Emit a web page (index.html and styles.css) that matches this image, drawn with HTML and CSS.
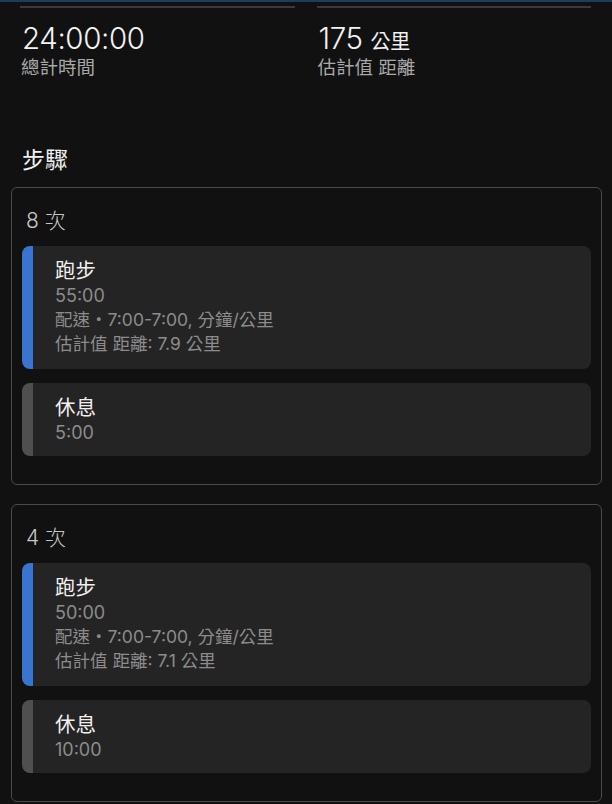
FILE: index.html
```html
<!DOCTYPE html>
<html lang="zh-Hant">
<head>
<meta charset="utf-8">
<link rel="stylesheet" href="styles.css">
</head>
<body>
<div class="topline"></div>
<div class="stats">
  <div class="stat">
    <div class="bar"></div>
    <div class="value">24:00:00</div>
    <div class="label">總計時間</div>
  </div>
  <div class="stat">
    <div class="bar"></div>
    <div class="value">175 <span class="unit">公里</span></div>
    <div class="label">估計值 距離</div>
  </div>
</div>
<h2 class="section">步驟</h2>
<div class="card">
  <div class="repeat">8 次</div>
  <div class="step run">
    <div class="title">跑步</div>
    <div class="time">55:00</div>
    <div class="sub">配速・7:00-7:00, 分鐘/公里</div>
    <div class="sub">估計值 距離: 7.9 公里</div>
  </div>
  <div class="step rest">
    <div class="title">休息</div>
    <div class="time">5:00</div>
  </div>
</div>
<div class="card">
  <div class="repeat">4 次</div>
  <div class="step run">
    <div class="title">跑步</div>
    <div class="time">50:00</div>
    <div class="sub">配速・7:00-7:00, 分鐘/公里</div>
    <div class="sub">估計值 距離: 7.1 公里</div>
  </div>
  <div class="step rest">
    <div class="title">休息</div>
    <div class="time">10:00</div>
  </div>
</div>
</body>
</html>
```

FILE: styles.css
```css
html, body {
  margin: 0;
  padding: 0;
  background: #111111;
  color: #f0f0f0;
  font-family: Inter, "Noto Sans CJK TC", sans-serif;
}
.topline {
  height: 2px;
  background: #1f3c5a;
}
.stats {
  display: grid;
  grid-template-columns: 1fr 1fr;
  column-gap: 22px;
  padding: 4px 21px 0 20px;
}
.bar {
  height: 2px;
  background: #3a3a3a;
}
.value {
  margin-top: 12px;
  padding-left: 2px;
  font-size: 29.5px;
  font-weight: 300;
  line-height: 36px;
  height: 36px;
  color: #f2f2f2;
  letter-spacing: -0.4px;
}
.unit {
  font-size: 20px;
  line-height: 1;
  font-weight: 400;
}
.label {
  padding-left: 1px;
  font-size: 18.5px;
  line-height: 22px;
  color: #a8a8a8;
}
.section {
  margin: 67px 0 0 22px;
  font-size: 23px;
  font-weight: normal;
  line-height: 30px;
  color: #f0f0f0;
}
.card {
  margin: 12px 10px 19px 11px;
  border: 1.5px solid #4a4a4a;
  border-radius: 6px;
  padding: 19px 10px 28px 10px;
}
.repeat {
  padding-left: 4px;
  font-size: 21px;
  font-weight: 300;
  line-height: 28px;
  color: #c8c8c8;
  margin-bottom: 11px;
}
.step {
  background: #242424;
  border-radius: 8px;
  padding: 12px 12px 13px 22px;
  margin-bottom: 14px;
  border-left: 11px solid #3874d0;
}
.step.rest {
  border-left-color: #4f4f4f;
  margin-bottom: 0;
  padding-bottom: 11px;
}
.title {
  font-size: 20.5px;
  line-height: 26px;
  color: #f0f0f0;
}
.time {
  font-size: 18px;
  line-height: 24px;
  color: #8c8c8c;
}
.sub {
  font-size: 17.5px;
  line-height: 24px;
  color: #8c8c8c;
}
```
